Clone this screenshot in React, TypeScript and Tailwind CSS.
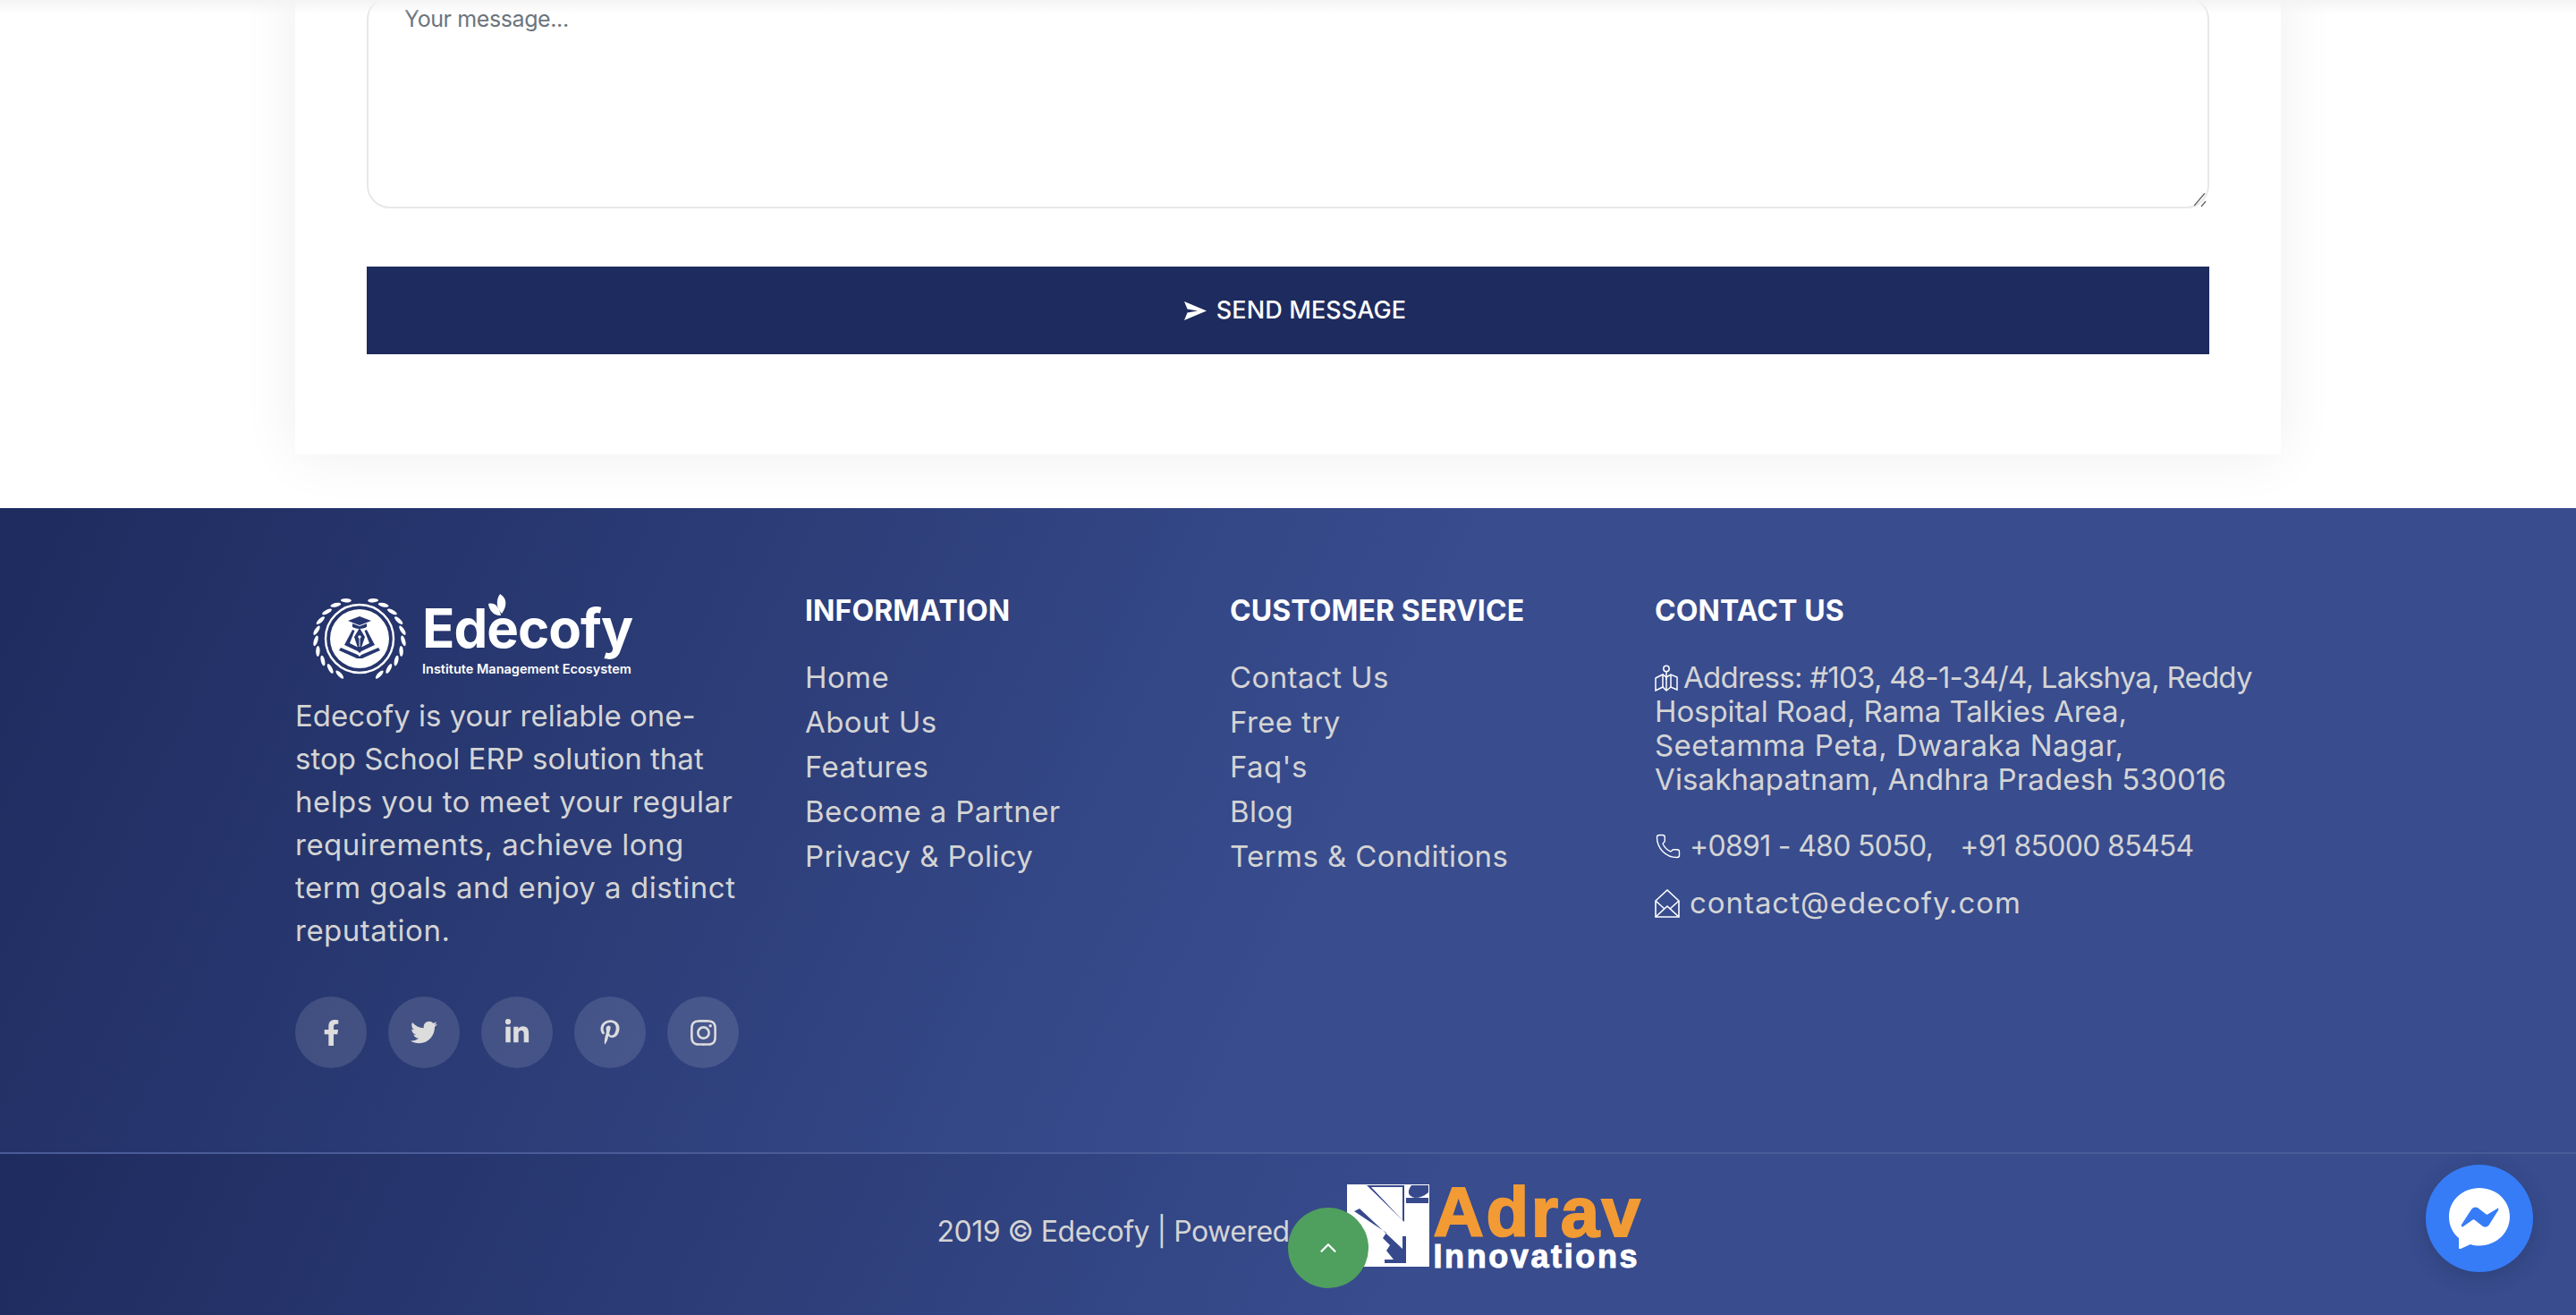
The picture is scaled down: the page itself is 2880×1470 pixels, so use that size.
import { FaFacebookF, FaTwitter, FaLinkedinIn, FaPinterestP, FaInstagram } from "react-icons/fa";
import { Phone, ChevronUp } from "lucide-react";

const infoLinks = ["Home", "About Us", "Features", "Become a Partner", "Privacy & Policy"];
const serviceLinks = ["Contact Us", "Free try", "Faq's", "Blog", "Terms & Conditions"];

function Emblem() {
  const angles = [18, 33, 48, 63, 78, 93, 108, 123, 138, 153];
  return (
    <svg viewBox="0 0 110 100" className="w-[110px] h-[100px] shrink-0">
      {[1, -1].map((side) =>
        angles.map((a) => {
          const r = (a * Math.PI) / 180;
          const x = 55 + side * 49 * Math.sin(r);
          const y = 50 - 45 * Math.cos(r);
          return (
            <ellipse key={`${side}-${a}`} cx={x} cy={y} rx="2.2" ry="6" fill="#fff" transform={`rotate(${side * (a + 70)} ${x} ${y})`} />
          );
        })
      )}
      <circle cx="55" cy="50" r="38" fill="none" stroke="#fff" strokeWidth="2.4" />
      <circle cx="55" cy="50" r="33" fill="#fff" />
      <path d="M55 25 L68 30 L55 35 L42 30 Z" fill="#263670" />
      <path d="M47 33 V37 Q55 41 63 37 V33 L55 36 Z" fill="#263670" />
      <path d="M55 38 L61 48 L57 60 H53 L49 48 Z" fill="#263670" />
      <circle cx="55" cy="48" r="1.7" fill="#fff" />
      <path d="M55 49 V59" stroke="#fff" strokeWidth="1" />
      <path d="M47 40 L38 57 L53 64 L55 66 L57 64 L72 57 L63 40 L60.5 41 L66 55 L56 60 H54 L44 55 L49.5 41 Z" fill="#263670" />
      <path d="M34 60 L53 68 L55 70 L57 68 L76 60 L78 63 L58 72 H52 L32 63 Z" fill="#263670" />
    </svg>
  );
}

function EdecofyLogo() {
  return (
    <div className="flex items-center ml-[17px] h-[96px] gap-[15px]">
      <Emblem />
      <div className="flex flex-col w-[236px] text-white">
        <div className="relative h-[60px] text-[60px] leading-[60px] font-bold tracking-[-1px] whitespace-nowrap">
          Edecofy
          <svg viewBox="0 0 30 28" className="absolute left-[71px] top-[-8px] w-[32px] h-[28px]">
            <path d="M15 0 C22 4 24 12 17 22 C11 16 10 7 15 0 Z" fill="#fff" />
            <path d="M2 11 C8 9 14 13 16 24 C9 25 3 19 2 11 Z" fill="#fff" />
          </svg>
        </div>
        <div className="mt-[7px] text-[14.5px] leading-[18px] font-semibold whitespace-nowrap">
          Institute Management Ecosystem
        </div>
      </div>
    </div>
  );
}

function AdravLogo() {
  return (
    <div className="flex items-start w-[327px] gap-[5px] -mt-[10px]">
      <svg viewBox="0 0 92 92" className="w-[92px] h-[92px] shrink-0">
        <rect width="92" height="92" fill="#fff" />
        <path d="M22 1 H64 V42 L62 40 V3 H27 L62 40 L64 42 Z" fill="#37498d" />
        <path d="M66 1 H91 V23 H66 Z" fill="#37498d" />
        <path d="M66 1 H72 Q64 12 76 15 Q84 15 91 9 V15 H66 Z" fill="#fff" />
        <path d="M66 21 H91 V26 H66 Z" fill="#fff" />
        <path d="M8 30 L14 27 L62 72 V58 H66 V88 H42 V84 H52 L44 74 L48 68 L40 60 L44 54 Z" fill="#37498d" />
        <path d="M18 44 L44 66 L40 70 L44 78 L40 78 L34 70 L38 66 Z" fill="#fff" />
      </svg>
      <div className="flex flex-col font-['Liberation_Sans',sans-serif] font-bold">
        <div className="h-[62px] text-[#f29b34] text-[78px] leading-[62px] tracking-[2.6px] whitespace-nowrap [-webkit-text-stroke:2px_#f29b34]">Adrav</div>
        <div className="mt-[3px] text-white text-[36px] leading-[32px] tracking-[2.6px] whitespace-nowrap [-webkit-text-stroke:1px_#fff]">Innovations</div>
      </div>
    </div>
  );
}

function Heading({ children }: { children: string }) {
  return (
    <h4 className="text-white text-[32px] leading-[44px] font-bold tracking-[0.1px] whitespace-nowrap">{children}</h4>
  );
}

function LinkList({ links }: { links: string[] }) {
  return (
    <ul className="mt-[27px] flex flex-col text-[33px] leading-[50px] tracking-[0.4px]">
      {links.map((l) => (
        <li key={l} className="whitespace-nowrap">{l}</li>
      ))}
    </ul>
  );
}

function MapIcon() {
  return (
    <svg viewBox="0 0 26 30" className="w-[26px] h-[30px] shrink-0 inline-block" fill="none" stroke="#fff" strokeWidth="1.5">
      <circle cx="13" cy="4.5" r="3.2" />
      <path d="M13 8 V17" />
      <path d="M1 15 L9 11 L13 14 L18 11 L25 14 V28 L18 25 L13 29 L9 25 L1 29 Z" />
      <path d="M9 11 V25 M18 11 V25 M13 14 V29" />
    </svg>
  );
}

function EnvelopeIcon() {
  return (
    <svg viewBox="0 0 28 32" className="w-[28px] h-[32px] shrink-0" fill="none" stroke="#fff" strokeWidth="1.6">
      <path d="M1 13 L14 1 L27 13 V31 H1 Z" />
      <path d="M1 31 L14 19 L27 31" />
      <path d="M1 13 L11 22 M27 13 L17 22" />
    </svg>
  );
}

export default function App() {
  const socials = [
    <FaFacebookF key="f" size={29} />,
    <FaTwitter key="t" size={30} />,
    <FaLinkedinIn key="l" size={30} />,
    <FaPinterestP key="p" size={28} />,
    <FaInstagram key="i" size={33} />,
  ];
  return (
    <div className="relative h-[1470px] overflow-hidden bg-white font-['Inter',sans-serif]">
      <section className="flex h-[568px] pl-[330px]">
        <div className="w-[2220px] h-[548px] -mt-[40px] px-[80px] pt-[36px] bg-white shadow-[0_0_60px_rgba(0,0,0,0.07)]">
          <div className="relative">
            <textarea
              readOnly
              placeholder="Your message..."
              className="block w-full h-[237px] resize-none rounded-[26px] border-2 border-[#e8e8e8] px-[40px] py-[4px] text-[25px] leading-[38px] tracking-[-0.4px] placeholder:text-[#6c757d] outline-none"
            />
            <svg viewBox="0 0 14 15" className="absolute right-[3px] bottom-[2px] w-[14px] h-[15px]">
              <path d="M0 14 L12 0 M8 15 L13 9" stroke="#666" strokeWidth="1.4" fill="none" />
            </svg>
          </div>
          <button className="mt-[65px] w-full h-[98px] pl-[16px] bg-[#1e2b5e] text-white flex items-center justify-center gap-[11px] text-[27px] font-medium tracking-[0.1px]">
            <svg viewBox="0 0 25 21" className="w-[25px] h-[21px]">
              <path d="M0 0 L25 10.5 L0 21 L3.5 12.5 L15 10.5 L3.5 8.5 Z" fill="#fff" />
            </svg>
            SEND MESSAGE
          </button>
        </div>
      </section>

      <footer className="text-[#d4d4d4]">
        <div className="h-[722px] pl-[330px] pt-[93px] flex border-b-2 border-[#4a5c98] bg-[linear-gradient(115deg,#1e2b5e_0%,#384c8e_52%)]">
          <div className="w-[570px]">
            <div className="mt-[5px]">
              <EdecofyLogo />
            </div>
            <p className="mt-[14px] text-[33px] leading-[48px] whitespace-nowrap">
              <span>Edecofy is your reliable one-</span><br />
              <span>stop School ERP solution that</span><br />
              <span className="tracking-[0.45px]">helps you to meet your regular</span><br />
              <span className="tracking-[0.5px]">requirements, achieve long</span><br />
              <span className="tracking-[0.5px]">term goals and enjoy a distinct</span><br />
              <span className="tracking-[0.5px]">reputation.</span>
            </p>
            <div className="mt-[50px] flex gap-[24px]">
              {socials.map((icon, i) => (
                <span key={i} className="w-[80px] h-[80px] rounded-full bg-white/[0.12] flex items-center justify-center text-[#dcdcdc]">
                  {icon}
                </span>
              ))}
            </div>
          </div>
          <div className="w-[475px]">
            <Heading>INFORMATION</Heading>
            <LinkList links={infoLinks} />
          </div>
          <div className="w-[475px]">
            <Heading>CUSTOMER SERVICE</Heading>
            <LinkList links={serviceLinks} />
          </div>
          <div>
            <Heading>CONTACT US</Heading>
            <p className="mt-[33px] text-[33px] leading-[38px] tracking-[0.13px] whitespace-nowrap">
              <span className="inline-flex align-[-4px] mr-[6px]"><MapIcon /></span>
              <span className="tracking-[-0.75px]">Address: #103, 48-1-34/4, Lakshya, Reddy</span><br />
              <span className="tracking-[-0.1px]">Hospital Road, Rama Talkies Area,</span><br />
              <span className="tracking-[0.45px]">Seetamma Peta, Dwaraka Nagar,</span><br />
              <span>Visakhapatnam, Andhra Pradesh 530016</span>
            </p>
            <div className="mt-[32px] h-[48px] flex items-center text-[32px] tracking-[-0.7px] whitespace-nowrap">
              <Phone size={30} strokeWidth={1.1} className="text-white mr-[9px]" />
              <span>+0891 - 480 5050,</span>
              <span className="ml-[30px]">+91 85000 85454</span>
            </div>
            <div className="mt-[16px] h-[48px] flex items-center gap-[11px] text-[33px] tracking-[0.95px] whitespace-nowrap">
              <EnvelopeIcon />
              <span>contact@edecofy.com</span>
            </div>
          </div>
        </div>

        <div className="h-[180px] pb-[6px] flex items-center justify-center bg-[linear-gradient(115deg,#1e2b5e_0%,#384c8e_55%)]">
          <span className="w-[458px] text-[32px] tracking-[-0.5px] whitespace-nowrap overflow-hidden">2019 © Edecofy | Powered by</span>
          <AdravLogo />
        </div>
      </footer>

      <div className="absolute top-0 left-0 right-0 h-[16px] bg-gradient-to-b from-[#f4f4f4] to-transparent" />

      <button className="absolute left-[1440px] top-[1350px] w-[90px] h-[90px] rounded-full bg-[#4f9f5f] flex items-center justify-center text-white">
        <ChevronUp size={30} strokeWidth={1.8} />
      </button>

      <div className="absolute left-[2712px] top-[1302px] w-[120px] h-[120px] rounded-full bg-[#367cf6] shadow-[0_6px_24px_rgba(0,0,0,0.15)] flex items-center justify-center">
        <svg viewBox="0 0 68 68" className="w-[68px] h-[68px]">
          <path d="M34 0 C15 0 0 14 0 32 C0 42 4 50 11 56 V67 C11 68 12 68.5 13 68 L24 63 C27 64 30 64.5 34 64.5 C53 64.5 68 50 68 32 C68 14 53 0 34 0 Z" fill="#fff" />
          <path d="M14 41 L25 24 C27 21 30 21 32 22 L41 29 C42 30 43 30 44 29 L54 23 C55 22 56 23 55 25 L45 41 C43 44 40 44 38 43 L29 36 C28 35 27 35 26 36 L16 43 C15 44 13 43 14 41 Z" fill="#367cf6" />
        </svg>
      </div>
    </div>
  );
}
